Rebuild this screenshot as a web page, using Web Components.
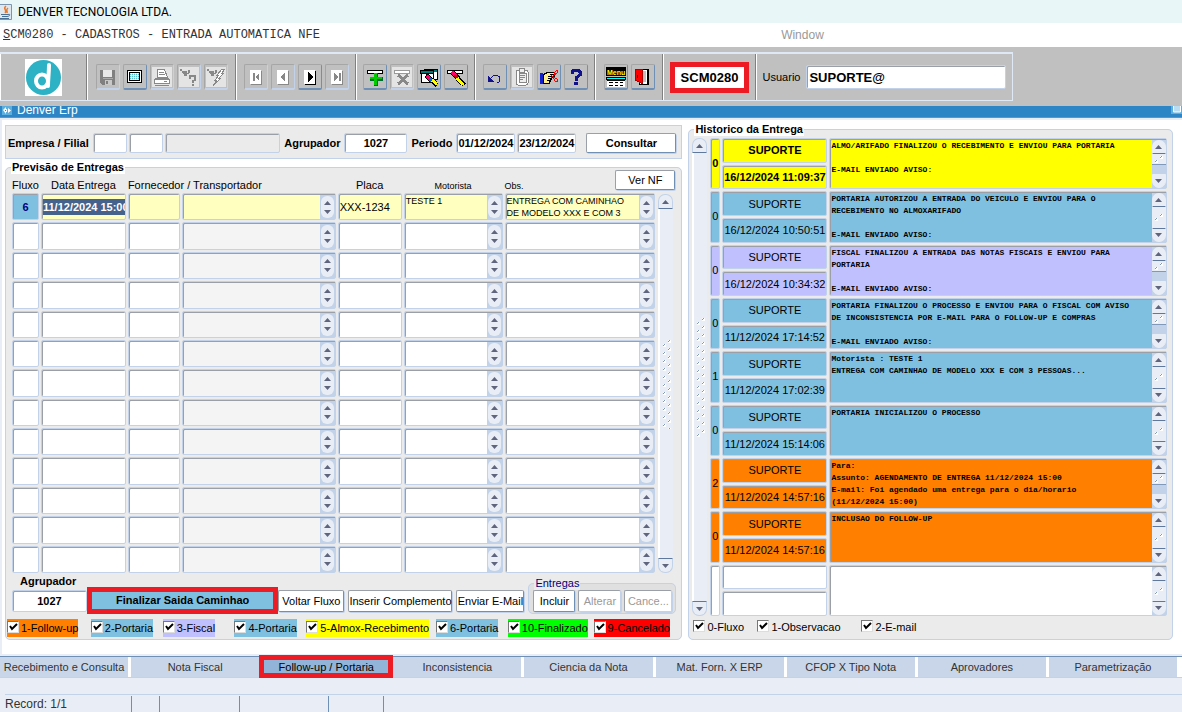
<!DOCTYPE html>
<html lang="pt-BR">
<head>
<meta charset="utf-8">
<title>DENVER TECNOLOGIA LTDA.</title>
<style>
  html, body { margin: 0; height: 100%; }
  body {
    font: 11px/13px "Liberation Sans", Arial, sans-serif; color: #000; background: #fff;
    --edge: #c2d2e8; --edge-dark: #9a9fa8; --edge-btn: #6f8fb5; --panel: #ebebeb; --pale: #e9eef6;
    --mark: #ed1c24; --blue: #7fc0e0; --yellow: #ff0; --lilac: #c0c0ff; --orange: #ff8000;
  }
</style>
</head>
<body>
<erp-app></erp-app>
<script>
const esc = (s) => String(s ?? '').replace(/[&<>"']/g, (c) => ({'&':'&amp;','<':'&lt;','>':'&gt;','"':'&quot;',"'":'&#39;'}[c]));

// shared by every shadow root that holds form controls
const base = `
  * { box-sizing: border-box; }
  input, textarea, button { font: inherit; color: inherit; margin: 0; border-radius: 0; outline: 0; }
  input, textarea { border: 1px solid var(--edge); box-shadow: inset 1px 1px 0 var(--edge-dark);
    border-radius: 2px; background: #fff; padding: 0 1px; min-width: 0; }
  button { background: #fff; border: 1px solid var(--edge-dark); border-right-color: var(--edge-btn);
    border-bottom-color: var(--edge-btn); box-shadow: 1px 1px 0 var(--edge); border-radius: 2px; padding: 0; white-space: nowrap; }
  button:disabled { color: #999; border-color: var(--edge-dark) var(--edge) var(--edge) var(--edge-dark); }
`;

class BaseElement extends HTMLElement {
  constructor() {
    super();
    this.attachShadow({ mode: 'open' });
  }
  connectedCallback() { this.render(); }
  paint(css, html) { this.shadowRoot.innerHTML = `<style>${base}${css}</style>${html}`; }
}

const paper = '<path fill="#fff" d="M4 3h11v14H4z"/><path fill="#888" d="M15 4h1v14H5v-1h10z"/>';
const icons = {
  save: '<path fill="#808080" d="M2 3h15v15H4l-2-2z"/><path fill="#e8e8e8" d="M5 3h9v7H5z"/><path fill="#aaa" d="M5 11h10v1H5z"/><path fill="#c8c8c8" d="M7 13h7v5H7z"/><path fill="#808080" d="M8 14h2v3H8z"/>',
  screen: '<rect x="2.500" y="3.500" width="14" height="12" rx="1" fill="#fff" stroke="#000"/><rect x="4.500" y="5.500" width="10" height="8" fill="#9ff" stroke="#000"/><path stroke="#5bc" stroke-dasharray="1 1" d="M5 7.500h9M5 9.500h9M5 11.500h9"/><path stroke="#fff" stroke-dasharray="1 1" d="M6 6.500h7M6 8.500h7M6 10.500h7M6 12.500h7"/>',
  print: '<path fill="#e4e4e4" d="M0 0h20v20H0z"/><path fill="#fff" stroke="#888" d="M5.500 2.500h7l3 8h-10z"/><path stroke="#888" d="M7 5.500h5M7 7.500h6M3 11.500h14"/><path fill="#fff" stroke="#888" d="M2.500 12.500h15v4h-15z"/><path stroke="#888" d="M3 18.500h14M12 14.500h3"/>',
  query: '<path fill="#e4e4e4" d="M0 0h20v20H0z"/><path fill="#888" d="M1 2h2v2H1zM3 4h5v2H3zM4 6h6v1H4zM5 7h3v2H5zM9 3h2v3H9z"/><path fill="none" stroke="#888" stroke-width="2" d="M11 12V9h5v4l-2 1v2"/><path fill="#888" d="M13 17h2v2h-2z"/>',
  execute: '<path fill="#e4e4e4" d="M0 0h20v20H0z"/><path fill="#888" d="M1 2h2v2H1zM3 4h5v2H3zM4 6h6v1H4zM5 7h3v2H5zM9 3h2v3H9z"/><path fill="#fff" stroke="#888" d="M16 2l-5 6h2l-4 5h2l-4 6 8-8h-2l5-5h-2l3-4z"/>',
  first: paper + '<path fill="#888" d="M7 6h2v8H7zM13 6v8l-4-4z"/>',
  prev: paper + '<path fill="#888" d="M12 5v10l-5-5z"/>',
  next: paper + '<path fill="#000" d="M8 5v10l5-5zM15 4h1v14H5v-1h10z"/>',
  last: paper + '<path fill="#888" d="M7 6v8l4-4zM12 6h2v8h-2z"/>',
  insert: '<path fill="#fff" stroke="#000" d="M2.500 3.500h15v3h-15z"/><path fill="#063" d="M9 6h4v4h5v4h-5v5H9v-5H5v-4h4z"/><path fill="#0c0" d="M9 6h3v4h5v2h-5v6H9v-6H5v-2h4z"/>',
  remove: '<path fill="#e4e4e4" d="M0 0h20v20H0z"/><path fill="#fff" stroke="#999" d="M2.500 3.500h15v3h-15z"/><path stroke="#888" stroke-width="3" d="M6 8l10 9M16 8L6 17"/>',
  edit: '<path fill="#077" stroke="#000" d="M5.500 2.500h13v10h-13z"/><path fill="#fff" d="M7 5h11v7H7z"/><path fill="#077" stroke="#000" d="M1.500 3.500h13v3h-13z"/><path fill="#fff" stroke="#000" d="M2.500 6.500h12v9h-12z"/><path stroke="#000" stroke-width="5" d="M7 8l11 10"/><path stroke="#f06" stroke-width="3" d="M8 9l3 3"/><path stroke="#06c" stroke-width="3" d="M11 12l2 2"/><path stroke="#ff0" stroke-width="3" d="M13 13l5 4"/>',
  clear: '<path fill="#fff" stroke="#000" d="M1.500 3.500h15v3h-15z"/><path stroke="#000" stroke-width="5" d="M6 5l12 13"/><path stroke="#f06" stroke-width="3" d="M6 5l4 4"/><path stroke="#c00" stroke-width="3" d="M9 8l2 3"/><path stroke="#ff0" stroke-width="3" d="M11 11l6 7"/>',
  undo: '<path fill="none" stroke="#118" d="M5 13c2-6 10-6 10-1 0 2-1 4-3 4"/><path fill="#118" d="M3 9v6h6z"/>',
  paste: '<path fill="#e4e4e4" d="M0 0h20v20H0z"/><rect x="4" y="3" width="12" height="15" rx="2" fill="#fff" stroke="#888"/><path fill="#eee" stroke="#888" d="M7.500 1.500h5v4h-5zM7 6h7v9H7z"/><path stroke="#888" d="M8 8.500h5M8 10.500h5M8 12.500h3"/>',
  hand: '<path fill="#12c" d="M1 6h3v11H1z"/><path fill="#fe8" stroke="#000" d="M4.500 7.500l4-2h7v2h-5 5v3h-3v2h-1v2h-1v2h-6z"/><path stroke="#000" d="M9 9.500h6M9 11.500h4M8 13.500h4"/><g fill="none" stroke="#f00"><path d="M15.500 5.500l2-2h1v2l-2 2zM15.500 10.500l3 2v2h-2l-2-3zM16 7l-4 4M15 11l-3-3"/></g>',
  help: '<path fill="none" stroke="#118" stroke-width="3" d="M6 7V4l2-1h4l2 2v3l-4 3v3"/><path fill="#118" d="M8 15h4v3H8z"/>',
  menu: '<path fill="#000" d="M0 0h20v9H0z"/><text x="1" y="8" font-family="Liberation Sans" font-weight="bold" font-size="7" fill="#ff0">Menu</text><path fill="#0ff" stroke="#000" d="M.5 10.500h19v2H.5z"/><path fill="#fff" d="M1 13h18v7H1z"/><path stroke="#000" d="M1 13.500h18M3 15.500h4M9 15.500h3M14 15.500h3M3 18.500h4M9 18.500h3M14 18.500h3"/>',
  exit: '<path fill="#fff" stroke="#000" d="M6.500 2.500h8v15h-8z"/><path fill="#000" d="M14 2h2v16h-2z"/><path fill="#c0c0c0" d="M10 4h3v11h-3z"/><path fill="#f00" stroke="#a00" d="M2.500 2.500h7v14l-7-3z"/><path fill="#000" d="M4 8h1v3H4z"/>',
};

class ToolButton extends BaseElement {
  render() {
    const off = this.hasAttribute('disabled');
    this.paint(`
      :host { display: block; }
      button { display: grid; place-items: center; width: 24px; height: 26px; background: none; box-shadow: none;
        border: 1px solid; border-color: #a6a6a6 var(--edge-btn) var(--edge-btn) #a6a6a6; border-bottom-width: 2px; }
      button:disabled { border-color: #a6a6a6 var(--edge) var(--edge) #a6a6a6; }
      svg { display: block; width: 20px; height: 20px; }
    `, `<button type="button" aria-label="${esc(this.getAttribute('icon'))}" ${off ? 'disabled' : ''}>
      <svg viewBox="0 0 20 20" shape-rendering="crispEdges">${icons[this.getAttribute('icon')]}</svg></button>`);
  }
}
customElements.define('tool-button', ToolButton);

class ToolBar extends BaseElement {
  render() {
    const group = (w, list) => `<div class="g" style="flex-basis:${w}px">${list.split(' ').map((n) =>
      `<tool-button icon="${n.replace('!', '')}" ${n.endsWith('!') ? 'disabled' : ''}></tool-button>`).join('')}</div>`;
    this.paint(`
      :host { display: block; background: #c0c0c0; padding: 5px 0; }
      .bar { display: flex; width: fit-content; height: 49px; border: 1px solid #dfe9f5; border-top-width: 2px; border-left-width: 0; }
      .g { display: flex; align-items: center; justify-content: center; gap: 3px; flex: none;
        border-right: 1px solid #808080; border-left: 1px solid #fff; }
      .g:last-child { border-right: 0; }
      .logo svg { display: block; width: 37px; height: 37px; background: #fff; }
      .code input { width: 79px; height: 31px; border: 5px solid var(--mark); border-radius: 0; box-shadow: none; padding: 0; font: bold 13px "Liberation Sans", sans-serif; text-align: center; }
      label { display: flex; align-items: center; gap: 6px; }
      label input { width: 200px; height: 24px; padding: 0 2px; font: bold 13px "Liberation Sans", sans-serif; }
    `, `
      <div class="bar">
        <div class="g logo" style="flex-basis:87px"><svg viewBox="0 0 37 37" role="img" aria-label="Denver">
          <circle cx="18.500" cy="18.500" r="17.500" fill="#2db1c4"/>
          <g fill="none" stroke="#fff" stroke-width="4"><ellipse cx="17" cy="22" rx="6" ry="6.500"/><path stroke-linecap="round" d="M24 6c0 8-1 14-1 21"/></g>
        </svg></div>
        ${group(149, 'save! screen print! query! execute!')}
        ${group(120, 'first! prev! next last!')}
        ${group(119, 'insert remove! edit clear')}
        ${group(120, 'undo paste! hand help')}
        ${group(68, 'menu exit')}
        <div class="g code" style="flex-basis:93px"><input aria-label="Programa" value="SCM0280"></div>
        <div class="g" style="flex-basis:256px"><label>Usuario <input value="SUPORTE@"></label></div>
      </div>`);
  }
}
customElements.define('tool-bar', ToolBar);

class GroupPanel extends BaseElement {
  render() {
    this.paint(`
      :host { display: flex; min-width: 0; }
      fieldset { display: flex; flex-direction: column; flex: 1; min-width: 0; margin: 0; padding: 0 1px 1px;
        border: 1px solid var(--edge); border-radius: 5px; background: var(--panel-bg, var(--panel)); }
      legend { padding: 0 1px; margin-left: 4px; line-height: 13px; font-weight: var(--legend-weight, bold);
        color: var(--legend-color, #000); background: var(--legend-bg, #fff); }
    `, `<fieldset><legend>${esc(this.getAttribute('legend'))}</legend><slot></slot></fieldset>`);
  }
}
customElements.define('group-panel', GroupPanel);

// long scroll bar of a record block, or the short one of a text box with size="small"
class ScrollRail extends BaseElement {
  render() {
    const dots = this.getAttribute('dots') || 90;
    this.paint(`
      :host { display: flex; flex-direction: column; width: 15px; background: var(--edge); }
      button { height: 15px; flex: none; display: grid; place-items: center; background: var(--pale); border: 1px solid var(--edge); box-shadow: none; }
      button:first-of-type { border-bottom: 1px solid #60789c; border-radius: 7px 7px 0 0; }
      button:last-of-type { border-top: 1px solid #60789c; border-radius: 0 0 7px 7px; }
      svg { display: block; }
      .thumb { flex: 1; display: grid; place-items: center; background: var(--pale); border-left: 2px solid #fff; min-height: 0; overflow: hidden; }
      :host([size="small"]) { border-top: 1px solid var(--edge-dark); }
      :host([size="small"]) button { height: 14px; border-color: var(--pale); }
      :host([size="small"]) button:first-of-type { border-bottom-color: #60789c; }
      :host([size="small"]) button:last-of-type { border-top-color: #60789c; }
      :host([size="small"]) .thumb { border: 0; }
      :host([short]) .thumb { flex: none; height: 11px; margin-bottom: auto; border-bottom: 1px solid #8099bb; }
      :host([size="small"][short]) button:last-of-type { border-top-color: var(--pale); }
      :host(:not([size])) { background: var(--panel); }
    `, `
      <button type="button" aria-label="Acima"><svg width="7" height="4"><path fill="#60647c" d="M0 4L3.500 0 7 4z"/></svg></button>
      <div class="thumb"><svg width="8" height="${dots}" shape-rendering="crispEdges">
        <defs><pattern id="d" width="8" height="8" patternUnits="userSpaceOnUse">
          <path fill="#fff" d="M5 1h3v3H5zM0 5h3v3H0z"/><path fill="#8099bb" d="M6 1h1v1H6zM5 2h1v1H5zM1 5h1v1H1zM0 6h1v1H0z"/></pattern></defs>
        <rect width="8" height="${dots}" fill="url(#d)"/></svg></div>
      <button type="button" aria-label="Abaixo"><svg width="7" height="4"><path fill="#60647c" d="M0 0h7L3.500 4z"/></svg></button>`);
  }
}
customElements.define('scroll-rail', ScrollRail);

class SpinPill extends BaseElement {
  render() {
    this.paint(`
      :host { display: flex; width: 15px; padding: 1px; background: var(--edge); border-top: 1px solid var(--edge-dark); }
      div { flex: 1; display: flex; flex-direction: column; align-items: center; justify-content: center; gap: 5px;
        background: var(--pale); border-radius: 6px; }
      svg { display: block; }
    `, `<div><svg width="7" height="4"><path fill="#60647c" d="M0 4L3.500 0 7 4z"/></svg>
      <svg width="7" height="4"><path fill="#60647c" d="M0 0h7L3.500 4z"/></svg></div>`);
  }
}
customElements.define('spin-pill', SpinPill);

class FlowCheck extends BaseElement {
  render() {
    this.paint(`
      :host { display: inline-flex; }
      label { display: inline-flex; align-items: center; height: 18px; gap: 2px; white-space: nowrap; background: var(--tone, none); }
      input { appearance: none; width: 12px; height: 12px; border: 1px solid #777; border-right-color: #ddd; border-bottom-color: #ddd;
        border-radius: 0; box-shadow: none; padding: 0; background: #fff; }
      span { display: grid; margin-bottom: 2px; }
      span > * { grid-area: 1 / 1; }
      svg { pointer-events: none; width: 12px; height: 12px; }
    `, `<label><span><input type="checkbox" checked><svg viewBox="0 0 12 12"><path fill="none" stroke="#000" stroke-width="2" d="M3 5l2 3 5-5"/></svg></span><slot></slot></label>`);
  }
}
customElements.define('flow-check', FlowCheck);

class DeliveryFilter extends BaseElement {
  render() {
    this.paint(`
      :host { display: flex; align-items: center; height: 34px; gap: 2px; padding: 2px 5px 0 0; background: var(--panel);
        border: 1px solid var(--edge); font-weight: bold; box-sizing: border-box; }
      input { height: 20px; text-align: center; font-weight: bold; padding: 0; }
      label { white-space: nowrap; margin: 0 2px; }
      .s { width: 34px; } .n { flex: 1; background: var(--panel); } .a { width: 63px; } .d { width: 59px; }
      button { width: 90px; height: 20px; margin-left: 8px; }
    `, `
      <label for="emp">Empresa / Filial</label><input class="s" id="emp"><input class="s" aria-label="Filial">
      <input class="n" aria-label="Nome" disabled>
      <label for="agr">Agrupador</label><input class="a" id="agr" value="1027">
      <label for="per">Periodo</label><input class="d" id="per" value="01/12/2024"><input class="d" aria-label="Periodo final" value="23/12/2024">
      <button type="button">Consultar</button>`);
  }
}
customElements.define('delivery-filter', DeliveryFilter);

class DeliveryGrid extends BaseElement {
  row(r, i) {
    const on = i === 0;
    const text = (label, v) => `<td><div class="multi"><textarea rows="1" aria-label="${label}">${esc(v)}</textarea><spin-pill></spin-pill></div></td>`;
    return `<tr class="${on ? 'on' : ''}">
      <td><input class="flow" aria-label="Fluxo" value="${esc(r[0])}"></td>
      <td><div class="date"><input aria-label="Data Entrega" value="${esc(r[1])}"></div></td>
      <td><input aria-label="Fornecedor" value=""></td>
      <td><div class="multi name"><textarea rows="1" aria-label="Transportador"></textarea><spin-pill></spin-pill></div></td>
      <td><input aria-label="Placa" value="${esc(r[2])}"></td>
      ${text('Motorista', r[3])}${text('Obs.', r[4])}
    </tr>`;
  }
  render() {
    const rows = [['6', '11/12/2024 15:00', 'XXX-1234', 'TESTE 1', 'ENTREGA COM CAMINHAO\nDE MODELO XXX E COM 3']];
    while (rows.length < 13) rows.push([]);
    this.paint(`
      :host { display: grid; grid-template-columns: 1fr 15px; gap: 3px; flex: 1; position: relative; padding: 0 7px 0 5px; min-height: 0; }
      table { display: flex; flex-direction: column; min-width: 0; }
      thead, tbody, th, td { display: block; padding: 0; min-width: 0; }
      tr { display: grid; grid-template-columns: 27fr 85fr 52fr 154fr 64fr 99fr 151fr; gap: 2px; min-height: 0; }
      thead tr { height: 19px; align-items: end; padding-bottom: 1px; }
      th { font-weight: normal; white-space: nowrap; }
      th.two { grid-column: span 2; text-align: left; }
      th.sm { font-size: 9px; line-height: 11px; } th.left { text-align: left; }
      tbody { flex: 1; display: grid; grid-auto-rows: 1fr; gap: 2px; }
      td > * { width: 100%; height: 100%; display: block; }
      .flow { text-align: center; }
      .date, .multi { border: 1px solid var(--edge); box-shadow: inset 1px 1px 0 var(--edge-dark); border-radius: 2px; background: #fff; }
      .date { display: flex; align-items: center; padding-left: 1px; }
      .date input { width: 100%; height: 16px; border: 0; border-radius: 0; padding: 0; box-shadow: none; }
      .multi { display: flex; }
      textarea { flex: 1; border: 0; padding: 1px 1px 0; box-shadow: none; resize: none; overflow: hidden; background: none; font-size: 9px; line-height: 12px; white-space: pre; height: 100%; }
      .name { background: #f4f4f4; }
      .on input, .on .date, .on .multi { background: #ffffc0; }
      .on .flow { background: var(--blue); color: #000080; font-weight: bold; }
      .on .date input { background: #45628c; color: #fff; font-weight: bold; }
      .nf { position: absolute; right: 5px; top: -4px; width: 60px; height: 20px; }
      scroll-rail { margin-top: 20px; }
    `, `
      <table>
        <thead><tr><th>Fluxo</th><th>Data Entrega</th><th class="two">Fornecedor / Transportador</th><th>Placa</th><th class="sm">Motorista</th><th class="sm left">Obs.</th></tr></thead>
        <tbody>${rows.map((r, i) => this.row(r, i)).join('')}</tbody>
      </table>
      <scroll-rail></scroll-rail>
      <button class="nf" type="button">Ver NF</button>`);
  }
}
customElements.define('delivery-grid', DeliveryGrid);

class DeliveryActions extends BaseElement {
  render() {
    this.paint(`
      :host { display: flex; align-items: flex-end; padding: 0 4px 0 5px; gap: 4px; height: 41px; box-sizing: border-box; }
      label { font-weight: bold; }
      .agr { display: flex; flex-direction: column; gap: 2px; margin-bottom: 2px; }
      .agr label { padding-left: 8px; }
      .agr input { width: 75px; height: 22px; text-align: center; font-weight: bold; }
      button { height: 22px; margin-bottom: 2px; flex: 0 1 auto; }
      .go { flex: 1; height: 27px; margin: 0 0 0 -4px; background: var(--blue); border: 5px solid var(--mark); border-radius: 0; box-shadow: none; font-weight: bold; }
      .v { width: 66px; margin-left: -4px; } .i { width: 104px; } .e { width: 68px; }
      group-panel { --legend-color: #000080; --legend-weight: normal; --legend-bg: var(--panel); --panel-bg: #e0e0e0; width: 148px; flex: none; }
      .set { display: grid; grid-template-columns: 42fr 43fr 48fr; gap: 3px; padding: 0 2px 0 3px; }
      .set button { margin: 0; }
    `, `
      <div class="agr"><label for="a">Agrupador</label><input id="a" value="1027"></div>
      <button class="go" type="button">Finalizar Saida Caminhao</button>
      <button class="v" type="button">Voltar Fluxo</button>
      <button class="i" type="button">Inserir Complemento</button>
      <button class="e" type="button">Enviar E-Mail</button>
      <group-panel legend="Entregas"><div class="set"><button type="button">Incluir</button><button type="button" disabled>Alterar</button><button type="button" disabled>Cance...</button></div></group-panel>`);
  }
}
customElements.define('delivery-actions', DeliveryActions);

class FlowLegend extends BaseElement {
  render() {
    const items = [['1-Follow-up', 'var(--orange)'], ['2-Portaria', 'var(--blue)'], ['3-Fiscal', 'var(--lilac)'], ['4-Portaria', 'var(--blue)'],
      ['5-Almox-Recebimento', 'var(--yellow)'], ['6-Portaria', 'var(--blue)'], ['10-Finalizado', '#0f0'], ['9-Cancelado', '#f00']];
    this.paint(`
      :host { display: grid; grid-template-columns: 84fr 72fr 72fr 72fr 130fr 72fr 86fr 87fr; padding: 5px 0 1px; }
    `, items.map(([t, c]) => `<flow-check style="--tone:${c}">${t}</flow-check>`).join(''));
  }
}
customElements.define('flow-legend', FlowLegend);

class HistoryList extends BaseElement {
  render() {
    const rows = [
      ['0', '16/12/2024 11:09:37', 'yellow', 'ALMO/ARIFADO FINALIZOU O RECEBIMENTO E ENVIOU PARA PORTARIA\n\nE-MAIL ENVIADO AVISO:', 1],
      ['0', '16/12/2024 10:50:51', 'blue', 'PORTARIA AUTORIZOU A ENTRADA DO VEICULO E ENVIOU PARA O\nRECEBIMENTO NO ALMOXARIFADO\n\nE-MAIL ENVIADO AVISO:'],
      ['0', '16/12/2024 10:34:32', 'lilac', 'FISCAL FINALIZOU A ENTRADA DAS NOTAS FISCAIS E ENVIOU PARA\nPORTARIA\n\nE-MAIL ENVIADO AVISO:', 1],
      ['0', '11/12/2024 17:14:52', 'blue', 'PORTARIA FINALIZOU O PROCESSO E ENVIOU PARA O FISCAL COM AVISO\nDE INCONSISTENCIA POR E-MAIL PARA O FOLLOW-UP E COMPRAS\n\nE-MAIL ENVIADO AVISO:', 1],
      ['1', '11/12/2024 17:02:39', 'blue', 'Motorista : TESTE 1\nENTREGA COM CAMINHAO DE MODELO XXX E COM 3 PESSOAS...'],
      ['0', '11/12/2024 15:14:06', 'blue', 'PORTARIA INICIALIZOU O PROCESSO'],
      ['2', '11/12/2024 14:57:16', 'orange', 'Para:\nAssunto: AGENDAMENTO DE ENTREGA 11/12/2024 15:00\nE-mail: Foi agendado uma entrega para o dia/horario\n(11/12/2024 15:00)', 1],
      ['0', '11/12/2024 14:57:16', 'orange', 'INCLUSAO DO FOLLOW-UP'],
      ['', '', '', ''],
    ];
    this.paint(`
      :host { display: flex; flex: 1; gap: 3px; padding: 2px 4px 0 2px; min-height: 0; }
      .rows { flex: 1; display: grid; grid-auto-rows: 1fr; gap: 2px; min-width: 0; }
      .row { display: grid; grid-template-columns: 10px 105px 1fr; gap: 2px; min-height: 0; --tone: #fff; }
      .row:first-child { font-weight: bold; }
      input { background: var(--tone); padding: 0; width: 100%; text-align: center; }
      .who { display: grid; grid-template-rows: 1fr 1fr; gap: 2px; }
      .who input { min-height: 0; height: 100%; }
      .text { display: flex; min-height: 0; background: var(--tone); border: 1px solid var(--edge); box-shadow: inset 1px 1px 0 var(--edge-dark); border-radius: 2px; }
      textarea { flex: 1; border: 0; background: none; box-shadow: none; resize: none; overflow: hidden; padding: 1px 0 0 1px; white-space: pre; height: 100%;
        font: bold 8px/12px "Liberation Mono", monospace; }
      scroll-rail { width: 14px; }
      scroll-rail:not([size]) { width: 15px; }
    `, `
      <scroll-rail dots="120"></scroll-rail>
      <div class="rows">${rows.map(([n, when, tone, text, short]) => `
        <div class="row" ${tone ? `style="--tone:var(--${tone})"` : ''}>
          <input class="no" aria-label="Tipo" value="${n}">
          <div class="who"><input aria-label="Usuario" value="${when ? 'SUPORTE' : ''}"><input aria-label="Data" value="${when}"></div>
          <div class="text"><textarea rows="1" aria-label="Historico">${esc(text)}</textarea><scroll-rail size="small" dots="8" ${short ? 'short' : ''}></scroll-rail></div>
        </div>`).join('')}</div>`);
  }
}
customElements.define('history-list', HistoryList);

class TabStrip extends BaseElement {
  render() {
    const tabs = ['Recebimento e Consulta', 'Nota Fiscal', 'Follow-up / Portaria', 'Inconsistencia', 'Ciencia da Nota', 'Mat. Forn. X ERP', 'CFOP X Tipo Nota', 'Aprovadores', 'Parametrização'];
    this.paint(`
      :host { display: block; border-top: 2px solid var(--pale); border-bottom: 1px solid var(--edge); }
      nav { display: grid; grid-auto-columns: 1fr; grid-auto-flow: column; gap: 3px; padding-right: 5px; border-top: 1px solid var(--edge-btn); }
      button { height: 20px; border: 0; border-radius: 0; box-shadow: none; background: #c9d6e9; color: #333; }
      .on { background: #91b4d8; color: #000; border: 5px solid var(--mark); margin: -2px -3px -1px; line-height: 12px; height: 23px; position: relative; }
    `, `<nav>${tabs.map((t, i) => `<button type="button" class="${i === 2 ? 'on' : ''}">${t}</button>`).join('')}</nav>`);
  }
}
customElements.define('tab-strip', TabStrip);

class StatusBar extends BaseElement {
  render() {
    this.paint(`
      :host { display: flex; flex-direction: column; height: 34px; background: var(--pale); color: #333; font-size: 12px; line-height: 16px; }
      .top { height: 17px; border-bottom: 1px solid var(--edge); margin-left: 5px; }
      .cells { display: flex; flex: 1; padding: 1px 0 0 5px; }
      .cells span { border-right: 1px solid var(--edge-btn); box-sizing: border-box; }
    `, `<div class="top"></div><div class="cells"><span style="width:127px">Record: 1/1</span><span style="width:28px"></span><span style="width:80px"></span><span style="width:89px"></span><span style="width:55px"></span></div>`);
  }
}
customElements.define('status-bar', StatusBar);

class ErpApp extends BaseElement {
  render() {
    this.paint(`
      :host { display: flex; flex-direction: column; min-height: 100vh; }
      .title { display: flex; align-items: center; gap: 6px; height: 23px; background: #e8f6f7; font: 12px "Roboto", sans-serif; }
      .title svg { display: block; }
      .menu { display: flex; align-items: center; height: 24px; padding-left: 3px; background: #fff; font-size: 12px; color: #999; }
      .menu a { color: inherit; text-decoration: none; }
      .menu a:first-child { flex: 0 0 66%; font: 12px "Liberation Mono", monospace; color: #333; }
      .frame { display: flex; align-items: flex-end; gap: 5px; height: 12px; padding: 0 0 1px 2px; overflow: hidden;
        background: #2d85c5; color: #fff; font-size: 12px; line-height: 12px; border-bottom: 1px solid #6f8fb5; }
      .frame svg { display: block; align-self: flex-start; }
      .frame .max { margin-left: auto; }
      main { flex: 1; display: grid; grid-template-columns: 678fr 485fr; gap: 6px; padding: 5px 9px 14px 3px; border: 2px solid var(--pale);
        border-width: 2px 0 0 2px; min-height: 0; }
      .left { display: flex; flex-direction: column; gap: 2px; min-width: 0; }
      .left group-panel { flex: 1; }
      main > group-panel { margin-top: -2px; }
      .checks { display: grid; grid-template-columns: 64px 104px auto; padding: 2px 3px; }
    `, `
      <header class="title"><svg width="12" height="16" viewBox="0 0 12 16"><path fill="#dfe8ee" stroke="#7a95ad" d="M-1 .5h12.500v15H-1z"/><path fill="none" stroke="#e8792b" stroke-width="1.500" d="M6 2c-4 3 2 4-1 7M8 4c-3 2 0 3-1 5"/><path fill="none" stroke="#4a6f94" d="M1 10.500h7c3-1 2 2-1 2H2M0 14.500h9"/></svg>DENVER TECNOLOGIA LTDA.</header>
      <nav class="menu"><a href="#"><u>S</u>CM0280 - CADASTROS - ENTRADA AUTOMATICA NFE</a><a href="#">Window</a></nav>
      <tool-bar></tool-bar>
      <div class="frame"><svg width="10" height="9"><path fill="#5bb0e0" d="M0 0h10v9H0z"/><path fill="#fff" d="M1 4l3-3v2h1v3H4v2zM6 2l3 2.500L6 7z"/><path fill="#2d85c5" d="M3 4h1v1H3z"/></svg>Denver Erp
        <svg class="max" width="11" height="8"><path fill="#5bb0e0" d="M0 0h11v8H0z"/><path fill="#b9dcf2" stroke="#fff" d="M2.500-2h7v8h-7z"/></svg></div>
      <main>
        <div class="left">
          <delivery-filter></delivery-filter>
          <group-panel legend="Previsão de Entregas">
            <delivery-grid></delivery-grid>
            <delivery-actions></delivery-actions>
            <flow-legend></flow-legend>
          </group-panel>
        </div>
        <group-panel legend="Historico da Entrega">
          <history-list></history-list>
          <div class="checks"><flow-check>0-Fluxo</flow-check><flow-check>1-Observacao</flow-check><flow-check>2-E-mail</flow-check></div>
        </group-panel>
      </main>
      <tab-strip></tab-strip>
      <status-bar></status-bar>`);
  }
}
customElements.define('erp-app', ErpApp);
</script>
</body>
</html>
